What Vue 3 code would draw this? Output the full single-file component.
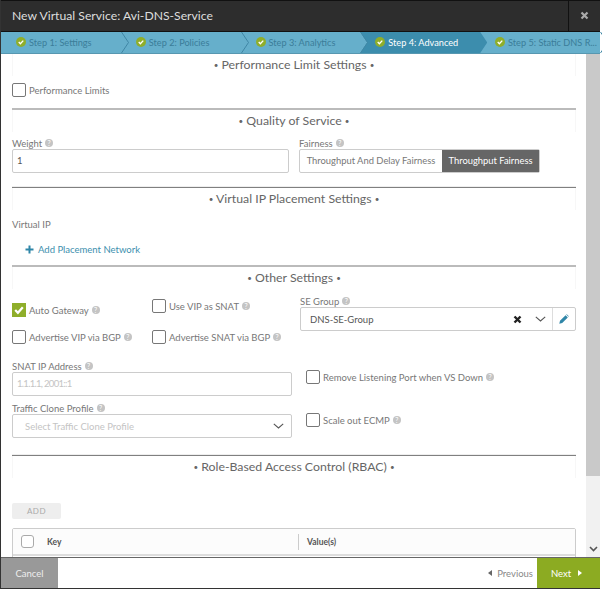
<script setup>
const steps = [
  { label: 'Step 1: Settings' },
  { label: 'Step 2: Policies' },
  { label: 'Step 3: Analytics' },
  { label: 'Step 4: Advanced', active: true },
  { label: 'Step 5: Static DNS R...' }
];
</script>

<template>
  <div class="modal">
    <header class="modal-head">
      <div class="modal-title">New Virtual Service: Avi-DNS-Service</div>
      <button class="close">
        <svg width="9" height="9" viewBox="0 0 9 9"><path d="M1.5 1.5l6 6M7.5 1.5l-6 6" stroke="#aaa" stroke-width="2.2" /></svg>
      </button>
    </header>

    <nav class="steps">
      <div v-for="step in steps" :key="step.label" class="step" :class="{ active: step.active }">
        <svg class="tick" width="10" height="10" viewBox="0 0 11 11">
          <circle cx="5.5" cy="5.5" r="5.5" fill="#8fae2a" />
          <path d="M3 5.6l1.8 1.8 3.2-3.4" fill="none" stroke="#fff" stroke-width="1.5" />
        </svg>
        <span>{{ step.label }}</span>
        <svg v-if="!step.active" class="chevron" width="8" height="21" viewBox="0 0 8 21"><path d="M0.5 0l7 10.5-7 10.5" fill="none" stroke="#3f87a5" /></svg>
      </div>
    </nav>

    <div class="body">
      <main class="form">
        <section class="sec sec-limits">
          <h3><i>•</i> Performance Limit Settings <i>•</i></h3>
          <div class="check-row limits-check">
            <span class="box"></span>
            <label>Performance Limits</label>
          </div>
        </section>

        <section class="sec sec-qos">
          <h3><i>•</i> Quality of Service <i>•</i></h3>
          <div class="qos-row">
            <div class="field weight">
              <label>Weight <i class="help">?</i></label>
              <div class="input">1</div>
            </div>
            <div class="field">
              <label>Fairness <i class="help">?</i></label>
              <div class="toggle">
                <span>Throughput And Delay Fairness</span>
                <span class="on">Throughput Fairness</span>
              </div>
            </div>
          </div>
        </section>

        <section class="sec sec-vip">
          <h3><i>•</i> Virtual IP Placement Settings <i>•</i></h3>
          <div class="vip-label">Virtual IP</div>
          <a class="add-link">
            <svg width="9" height="9" viewBox="0 0 9 9"><path d="M4.5 0.5v8M0.5 4.5h8" stroke="#2f86a8" stroke-width="2" /></svg>
            Add Placement Network
          </a>
        </section>

        <section class="sec sec-other">
          <h3><i>•</i> Other Settings <i>•</i></h3>
          <div class="other-top">
            <div class="checks">
              <div class="check-row auto">
                <span class="box checked">
                  <svg width="14" height="14" viewBox="0 0 14 14"><path d="M3.2 7l2.7 2.8 4.9-5.6" fill="none" stroke="#fff" stroke-width="2.2" /></svg>
                </span>
                <label>Auto Gateway <i class="help">?</i></label>
              </div>
              <div class="check-row snat">
                <span class="box"></span>
                <label>Use VIP as SNAT <i class="help">?</i></label>
              </div>
              <div class="check-row adv">
                <span class="box"></span>
                <label>Advertise VIP via BGP <i class="help">?</i></label>
              </div>
              <div class="check-row adv">
                <span class="box"></span>
                <label>Advertise SNAT via BGP <i class="help">?</i></label>
              </div>
            </div>
            <div class="field se-group">
              <label>SE Group <i class="help">?</i></label>
              <div class="select se-select">
                <span class="value">DNS-SE-Group</span>
                <svg class="clear" width="9" height="9" viewBox="0 0 9 9"><path d="M1.5 1.5l6 6M7.5 1.5l-6 6" stroke="#222" stroke-width="2.4" /></svg>
                <svg class="caret" width="11" height="6" viewBox="0 0 11 6"><path d="M0.8 0.8l4.7 4.2 4.7-4.2" fill="none" stroke="#555" stroke-width="1.1" /></svg>
                <span class="edit">
                  <svg width="10" height="10" viewBox="0 0 10 10"><path d="M0.3 9.7l0.7-2.9 5.6-5.6 2.2 2.2-5.6 5.6z M7.2 0.6l0.6-0.4 2 2-0.4 0.6z" fill="#2f86a8" /></svg>
                </span>
              </div>
            </div>
          </div>
          <div class="other-bottom">
            <div class="field">
              <label>SNAT IP Address <i class="help">?</i></label>
              <div class="input placeholder">1.1.1.1, 2001::1</div>
            </div>
            <div class="check-row side first">
              <span class="box"></span>
              <label>Remove Listening Port when VS Down <i class="help">?</i></label>
            </div>
            <div class="field">
              <label>Traffic Clone Profile <i class="help">?</i></label>
              <div class="select clone">
                <span class="value placeholder">Select Traffic Clone Profile</span>
                <svg class="caret" width="11" height="6" viewBox="0 0 11 6"><path d="M0.8 0.8l4.7 4.2 4.7-4.2" fill="none" stroke="#555" stroke-width="1.1" /></svg>
              </div>
            </div>
            <div class="check-row side">
              <span class="box"></span>
              <label>Scale out ECMP <i class="help">?</i></label>
            </div>
          </div>
        </section>

        <section class="sec sec-rbac">
          <h3><i>•</i> Role-Based Access Control (RBAC) <i>•</i></h3>
          <button class="add-btn">ADD</button>
          <div class="table">
            <div class="thead">
              <div class="th-check"><span class="box small-box"></span></div>
              <div class="th-key">Key</div>
              <div class="th-val">Value(s)</div>
            </div>
          </div>
        </section>
      </main>

      <aside class="scrollbar">
        <div class="thumb"></div>
        <div class="track">
          <svg width="9" height="6" viewBox="0 0 9 6"><path d="M1 1l3.5 3.5L8 1" fill="none" stroke="#555" stroke-width="1.6" /></svg>
        </div>
      </aside>
    </div>

    <footer class="modal-foot">
      <button class="cancel">Cancel</button>
      <div class="foot-right">
        <button class="prev"><i class="tri left"></i>Previous</button>
        <button class="next">Next<i class="tri right"></i></button>
      </div>
    </footer>
  </div>
</template>

<style>
html, body {
  background: #fff;
}
</style>

<style scoped>
.modal {
  width: 600px;
  height: 589px;
  display: flex;
  flex-direction: column;
  border-left: 1px solid #333;
  border-bottom: 1px solid #333;
  box-sizing: border-box;
  background: #fff;
  font-family: Lato, "Open Sans", sans-serif;
  color: #777;
  font-size: 9.5px;
}

.modal-head {
  height: 32px;
  flex: none;
  display: flex;
  align-items: center;
  justify-content: space-between;
  background: #2d2d2d;
  border-top: 1px solid #111;
  border-bottom: 1px solid #111;
  box-sizing: border-box;
}

.modal-title {
  padding: 0 0 2px 11px;
  font-size: 12.2px;
  color: #ddd;
}

.close {
  width: 32px;
  height: 30px;
  padding: 0 0 2px;
  background: none;
  border: none;
  border-left: 1px solid #111;
  display: flex;
  align-items: center;
  justify-content: center;
}

.steps {
  height: 21px;
  flex: none;
  display: flex;
  background: #66afcb;
  border-bottom: 1px solid #5797b0;
}

.step {
  position: relative;
  width: 119.75px;
  flex: none;
  display: flex;
  align-items: center;
  gap: 3px;
  padding: 0 0 1px 15px;
  box-sizing: border-box;
  color: #3b7d99;
  font-size: 9.2px;
  white-space: nowrap;
}

.step.active {
  color: #fff;
  background: #3c8dad;
  width: 127px;
  margin-right: -7.25px;
  z-index: 1;
  clip-path: polygon(0 0, 120px 0, 127px 50%, 120px 100%, 0 100%, 7px 50%);
}

.tick {
  flex: none;
}

.chevron {
  position: absolute;
  right: -8px;
  top: 0;
  z-index: 2;
}

.body {
  flex: 1;
  display: flex;
  min-height: 0;
  overflow: hidden;
}

.form {
  width: 585px;
  flex: none;
  padding: 0 10px 0 11px;
  box-sizing: border-box;
  overflow: hidden;
}

.sec {
  border-top: 2px solid #eee;
}

.sec h3 {
  margin: 0;
  height: 22px;
  line-height: 22px;
  font-size: 12.3px;
  font-weight: 400;
  text-align: center;
  color: #666;
  border-left: 1px solid #f7f7f7;
  border-right: 1px solid #f7f7f7;
  box-shadow: 0 -1px 0 #808080;
}

.sec h3 i {
  font-style: normal;
  font-size: 8px;
  vertical-align: 1px;
}

.sec-limits {
  height: 54px;
  border-top: none;
}

.sec-limits h3 {
  box-shadow: none;
}

.sec-qos {
  height: 76px;
}

.sec-vip {
  height: 77px;
}

.sec-other {
  height: 187px;
}

.sec-qos,
.sec-other {
  border-top-color: #bbb;
}

.sec-qos h3,
.sec-other h3 {
  box-shadow: none;
}

label {
  display: inline-flex;
  align-items: center;
  gap: 3px;
  font-size: 9.5px;
  white-space: nowrap;
}

.help {
  display: inline-block;
  width: 8px;
  height: 8px;
  border-radius: 50%;
  background: #c4c4c4;
  color: #fff;
  font-size: 7px;
  line-height: 8px;
  text-align: center;
  font-style: normal;
}

.box {
  width: 12px;
  height: 12px;
  flex: none;
  display: block;
  border: 1px solid #777;
  border-radius: 2px;
  background: #fff;
}

.box.checked {
  width: 14px;
  height: 14px;
  border: none;
  border-radius: 0;
  background: #8fae2a;
}

.check-row {
  display: flex;
  align-items: center;
  gap: 3px;
}

.limits-check {
  margin-top: 7px;
}

.qos-row {
  display: flex;
  gap: 10px;
  margin-top: 5px;
}

.weight {
  width: 277px;
}

.field > label {
  display: flex;
  height: 12px;
}

.input {
  height: 24px;
  line-height: 22px;
  padding-left: 4px;
  border: 1px solid #ccc;
  border-radius: 2px;
  box-sizing: border-box;
  color: #555;
}

.input.placeholder {
  color: #c4c4c4;
  letter-spacing: -0.7px;
}

.toggle {
  height: 24px;
  width: 241px;
  display: flex;
  border: 1px solid #ccc;
  border-radius: 2px;
  box-sizing: border-box;
  line-height: 22px;
  font-size: 9.4px;
}

.toggle span {
  flex: none;
  width: 142px;
  text-align: center;
  color: #777;
}

.toggle .on {
  width: 97px;
  background: #666;
  color: #fff;
}

.vip-label {
  margin-top: 9px;
  height: 12px;
  line-height: 12px;
}

.add-link {
  display: flex;
  align-items: center;
  gap: 4px;
  margin-top: 13px;
  padding-left: 13px;
  color: #3d8fae;
}

.other-top {
  display: flex;
  margin-top: 6px;
}

.checks {
  width: 288px;
  flex: none;
  display: grid;
  grid-template-columns: 140px 148px;
  grid-template-rows: 32px 16px;
  align-items: start;
}

.check-row.auto {
  margin-top: 8px;
}

.check-row.snat {
  margin-top: 4px;
}

.check-row.adv {
  margin-top: 3px;
}

.se-group {
  width: 276px;
}

.select {
  height: 24px;
  display: flex;
  align-items: center;
  border: 1px solid #ccc;
  border-radius: 2px;
  box-sizing: border-box;
  color: #555;
}

.value {
  flex: 1;
  padding-left: 9px;
}

.clear {
  margin-right: 13px;
}

.se-select .caret {
  margin-right: 6px;
}

.clone .caret {
  margin-right: 7px;
}

.edit {
  width: 22px;
  height: 100%;
  display: flex;
  align-items: center;
  justify-content: center;
  border-left: 1px solid #ddd;
}

.other-bottom {
  display: grid;
  grid-template-columns: 280px 1fr;
  column-gap: 14px;
  row-gap: 6px;
  margin-top: 17px;
}

.clone .value {
  padding-left: 12px;
  color: #c4c4c4;
}

.check-row.side {
  align-self: start;
  margin-top: 11px;
}

.check-row.side.first {
  margin-top: 10px;
}

.sec-rbac h3 {
  margin-bottom: 25px;
}

.add-btn {
  display: block;
  width: 49px;
  height: 16px;
  padding: 0;
  background: #eee;
  border: none;
  border-radius: 2px;
  color: #aaa;
  font-size: 8px;
  letter-spacing: 0.5px;
}

.table {
  margin-top: 9px;
  border: 1px solid #ccc;
  border-radius: 2px 2px 0 0;
  height: 40px;
}

.thead {
  display: flex;
  align-items: center;
  height: 25px;
  border-bottom: 2px solid #ddd;
  background: #fcfcfc;
  font-size: 8.5px;
  font-weight: 700;
  color: #555;
}

.th-check {
  width: 34px;
  padding-left: 8px;
  box-sizing: border-box;
}

.small-box {
  width: 11px;
  height: 11px;
  border-color: #aaa;
  border-radius: 3px;
}

.th-key {
  width: 251px;
  height: 16px;
  line-height: 16px;
  border-right: 1px solid #ccc;
}

.th-val {
  padding-left: 8px;
}

.scrollbar {
  width: 14px;
  flex: none;
  display: flex;
  flex-direction: column;
}

.thumb {
  height: 422px;
  background: #c9c9c9;
}

.track {
  flex: 1;
  background: #f1f1f1;
  display: flex;
  align-items: flex-end;
  justify-content: center;
  padding-bottom: 5px;
}

.modal-foot {
  height: 31px;
  flex: none;
  display: flex;
  justify-content: space-between;
  border-top: 1px solid #666;
  box-sizing: border-box;
}

button {
  font-family: inherit;
}

.cancel {
  width: 57px;
  padding: 0;
  border: none;
  background: #999;
  color: #eee;
  font-size: 9.5px;
}

.foot-right {
  display: flex;
}

.prev {
  display: flex;
  align-items: center;
  gap: 5px;
  padding: 0 4px 0 0;
  background: none;
  border: none;
  color: #888;
  font-size: 9.5px;
}

.next {
  width: 63px;
  display: flex;
  align-items: center;
  justify-content: center;
  gap: 7px;
  padding: 0 4px 0 0;
  background: #8cab22;
  border: none;
  color: #fff;
  font-size: 9.5px;
}

.tri {
  width: 0;
  height: 0;
  border-top: 3px solid transparent;
  border-bottom: 3px solid transparent;
}

.tri.left {
  border-right: 4px solid #666;
}

.tri.right {
  border-left: 4px solid #fff;
}
</style>
